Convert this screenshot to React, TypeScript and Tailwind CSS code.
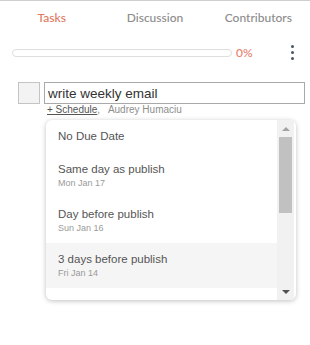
import React from 'react';

const tabs = ['Tasks', 'Discussion', 'Contributors'];

const options = [
  { title: 'No Due Date' },
  { title: 'Same day as publish', date: 'Mon Jan 17' },
  { title: 'Day before publish', date: 'Sun Jan 16' },
  { title: '3 days before publish', date: 'Fri Jan 14', active: true },
];

export default function App() {
  return (
    <main className="w-[310px] h-[345px] bg-white border-t border-[#cfcfcf] overflow-hidden">
      {/* Tabs */}
      <div className="grid grid-cols-3 pt-[8px] font-['Lato',sans-serif] font-medium text-[12px] leading-[18px]">
        {tabs.map((tab, i) => (
          <div
            key={tab}
            className={`text-center ${i === 0 ? 'text-[#e0775c]' : 'text-[#8c8c8c]'}`}
          >
            {tab}
          </div>
        ))}
      </div>

      {/* Progress */}
      <div className="flex items-center mt-[18px] pl-[12px] pr-[14px]">
        <div className="w-[220px] h-[8px] rounded-full border border-[#dedede] bg-white" />
        <span className="ml-[4px] text-[12px] leading-[14px] text-[#e8826f] font-['Lato',sans-serif] font-medium">
          0%
        </span>
        <div className="ml-auto flex flex-col gap-[3px] pr-[2px]">
          <span className="w-[3px] h-[3px] rounded-full bg-[#4a5563]" />
          <span className="w-[3px] h-[3px] rounded-full bg-[#4a5563]" />
          <span className="w-[3px] h-[3px] rounded-full bg-[#4a5563]" />
        </div>
      </div>

      {/* Task row */}
      <div className="flex mt-[22px] pl-[18px] pr-[5px] gap-[4px] font-['Liberation_Sans',Arial,sans-serif]">
        <div className="w-[22px] h-[22px] shrink-0 border border-[#c4c4c4] bg-[#f3f3f3]" />
        <div className="flex-1">
          <div className="h-[22px] border border-[#a9a9a9] px-[3px] text-[13.5px] leading-[21px] text-[#333]">
            write weekly email
          </div>
          <div className="pl-[3px] text-[10px] leading-[12px] text-[#8e8e8e]">
            <span className="underline text-[#555]">+ Schedule</span>,&nbsp;&nbsp; Audrey Humaciu
          </div>

          {/* Dropdown */}
          <div className="mt-[4px] ml-[2px] w-[250px] h-[180px] flex rounded-[6px] bg-white shadow-[0_1px_5px_rgba(0,0,0,0.25)] overflow-hidden">
            <div className="flex-1">
              {options.map((o) => (
                <div
                  key={o.title}
                  className={`pl-[12px] pt-[8px] pb-[9px] ${o.active ? 'bg-[#f5f5f5]' : ''}`}
                >
                  <div className="text-[11.5px] leading-[16px] text-[#555]">{o.title}</div>
                  {o.date && (
                    <div className="text-[9px] leading-[12px] text-[#9a9a9a]">{o.date}</div>
                  )}
                </div>
              ))}
            </div>
            {/* Scrollbar */}
            <div className="w-[17px] mr-[2px] bg-[#f1f1f1] flex flex-col items-center">
              <div className="h-[17px] flex items-center justify-center">
                <div className="w-0 h-0 border-x-[4px] border-x-transparent border-b-[4px] border-b-[#a3a3a3]" />
              </div>
              <div className="w-[13px] h-[76px] bg-[#c1c1c1]" />
              <div className="flex-1" />
              <div className="h-[17px] flex items-center justify-center">
                <div className="w-0 h-0 border-x-[4px] border-x-transparent border-t-[4px] border-t-[#505050]" />
              </div>
            </div>
          </div>
        </div>
      </div>
    </main>
  );
}
